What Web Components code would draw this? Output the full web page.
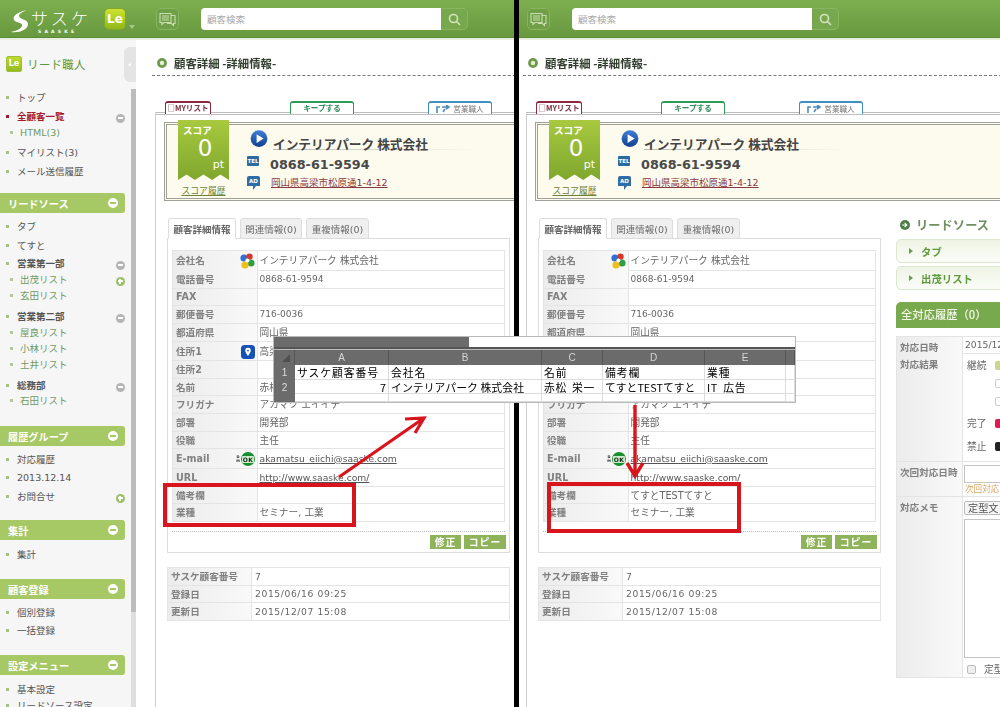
<!DOCTYPE html>
<html lang="ja"><head><meta charset="utf-8"><title>顧客詳細</title>
<style>
html,body{margin:0;padding:0;background:#fff}
body{position:relative;width:1000px;height:707px;overflow:hidden;font-family:"DejaVu Sans","Noto Sans CJK JP",sans-serif;color:#555}
.stage{display:flex;width:1000px;height:707px;filter:blur(.3px)}
.rule{flex:0 0 5px;background:#000}
sheet-overlay,mark-up{filter:blur(.3px)}
</style></head><body>
<div class="stage">
  <crm-pane style="flex:0 0 514px;--pad:16px">
    <crm-header slot="head" brand></crm-header>
    <side-nav slot="side">
      <nav-item>トップ</nav-item>
      <nav-item active tog="minus" style="margin-top:3px">全顧客一覧</nav-item>
      <nav-item sub>HTML(3)</nav-item>
      <nav-item style="margin-top:4px">マイリスト(3)</nav-item>
      <nav-item style="margin-top:3px">メール送信履歴</nav-item>
      <nav-bar style="margin:14px 0 5px">リードソース</nav-bar>
      <nav-item>タブ</nav-item>
      <nav-item style="margin-top:3px">てすと</nav-item>
      <nav-item group tog="minus" style="margin-top:2px">営業第一部</nav-item>
      <nav-item sub tog="plus">出茂リスト</nav-item>
      <nav-item sub>玄田リスト</nav-item>
      <nav-item group tog="minus" style="margin-top:5px">営業第二部</nav-item>
      <nav-item sub>屋良リスト</nav-item>
      <nav-item sub>小林リスト</nav-item>
      <nav-item sub>土井リスト</nav-item>
      <nav-item group tog="minus" style="margin-top:5px">総務部</nav-item>
      <nav-item sub style="margin-top:-1px">石田リスト</nav-item>
      <nav-bar style="margin:18px 0 5px">履歴グループ</nav-bar>
      <nav-item>対応履歴</nav-item>
      <nav-item style="margin-top:2px">2013.12.14</nav-item>
      <nav-item tog="plus" style="margin-top:3px">お問合せ</nav-item>
      <nav-bar style="margin:16px 0 6px">集計</nav-bar>
      <nav-item>集計</nav-item>
      <nav-bar style="margin:17px 0 5px">顧客登録</nav-bar>
      <nav-item>個別登録</nav-item>
      <nav-item style="margin-top:2px">一括登録</nav-item>
      <nav-bar style="margin:17px 0 6px">設定メニュー</nav-bar>
      <nav-item>基本設定</nav-item>
      <nav-item>リードソース設定</nav-item>
    </side-nav>
    <crm-detail slot="main"></crm-detail>
  </crm-pane>
  <div class="rule"></div>
  <crm-pane style="flex:1 1 0;--pad:4px">
    <crm-header slot="head"></crm-header>
    <crm-detail slot="main" wide note="てすとTESTてすと"></crm-detail>
  </crm-pane>
</div>
<sheet-overlay></sheet-overlay>
<mark-up></mark-up>
<script>
function def(name,css,render){
  customElements.define(name,class extends HTMLElement{
    connectedCallback(){
      if(this.shadowRoot)return;
      const r=this.attachShadow({mode:'open'});
      r.innerHTML='<style>'+css+'</style>'+render(this);
    }
  });
}

def('crm-pane',`
:host{display:flex;flex-direction:column;height:707px;overflow:hidden;min-width:0}
.body{display:flex;flex:1;min-height:0}
.main{flex:1;min-width:0;overflow:hidden;padding-left:var(--pad,0)}
`,()=>`<slot name="head"></slot><div class="body"><slot name="side"></slot><div class="main"><slot name="main"></slot></div></div>`);

def('crm-header',`
:host{display:flex;align-items:flex-start;height:40px;box-sizing:border-box;flex:none;padding-top:8px;
 background:linear-gradient(#7dae4f,#699a40 92%);border-bottom:2px solid #e9efdf;box-shadow:inset 0 -1px 0 #5a8a36}
.logo{display:flex;width:95px;margin-left:9px;height:30px;position:relative;color:#fff}
.logo svg{flex:none;margin-top:1px}
.kana{font-size:17px;letter-spacing:3.2px;line-height:20px;margin-left:2px;white-space:nowrap;font-family:"Noto Sans CJK JP",sans-serif;font-weight:300}
.roman{position:absolute;left:29px;top:21px;font-size:4.5px;font-weight:bold;letter-spacing:3.2px;line-height:5px}
.le{width:22px;height:22px;border-radius:5px;background:linear-gradient(#cfe32e,#8fb71c);border:1px solid #7fa82a;box-sizing:border-box;color:#fff;font:bold 12px/20px "DejaVu Sans",sans-serif;text-align:center}
.caret{width:0;height:0;border:3px solid transparent;border-top:4px solid #a6c98a;margin:17px 0 0 3px}
.chat{width:23px;height:22px;box-sizing:border-box;border:1px solid #88b560;border-radius:5px;background:#6f9f46;display:flex;align-items:center;justify-content:center}
.search{display:flex;height:22px}
.search .in{width:240px;box-sizing:border-box;background:#fff;border-radius:4px 0 0 4px;font-size:9.5px;color:#a8a8a8;line-height:22px;padding-left:6px;font-family:"Noto Sans CJK JP",sans-serif}
.search .go{width:27px;box-sizing:border-box;border:1px solid #88b560;border-left:0;border-radius:0 5px 5px 0;background:#78a84e;display:flex;align-items:center;justify-content:center}
`,h=>{
 const b=h.hasAttribute('brand');
 return (b?`<div class="logo"><svg width="20" height="24" viewBox="0 0 20 24"><path fill="#fff" d="M18 1C9 3 3 7 5 11c2 3 9 2 8 6-1 3-6 5-11 6 8 1 17-2 17-8 0-5-8-4-9-8 0-2 3-4 8-6z"/></svg><span class="kana">サスケ</span><span class="roman">SAASKE</span></div>
 <div class="le">Le</div><div class="caret"></div><div style="width:21px"></div>`:`<div style="width:8px"></div>`)+
 `<div class="chat"><svg width="17" height="15" viewBox="0 0 17 15" fill="none" stroke="#c9ddb0" stroke-width="1.1"><path d="M1 1.5h11v9H5l-2 2v-2H1z"/><path d="M3 4h7M3 6h7M3 8h7"/><path d="M12 3.5h4v8h-1.5v2l-2-2H8"/></svg></div>
 <div style="width:22px"></div>
 <div class="search"><div class="in">顧客検索</div><div class="go"><svg width="13" height="13" viewBox="0 0 13 13" fill="none" stroke="#d2e3bd" stroke-width="1.6"><circle cx="5.5" cy="5.5" r="4"/><path d="M8.5 8.5l3.5 3.5"/></svg></div></div>`;
});

def('side-nav',`
:host{display:flex;flex:0 0 136px;position:relative;background:#f6f6f6}
.col{width:131px;box-sizing:border-box}
.brand{display:flex;align-items:center;height:49px;padding:0 0 2px 6px;box-sizing:border-box;color:#5b9a3c;font-size:11.7px;font-family:"Noto Sans CJK JP",sans-serif}
.brand b{width:16px;height:16px;border-radius:3px;background:linear-gradient(#c4dd2e,#8fb81f);color:#fff;font:bold 8px/16px "DejaVu Sans",sans-serif;text-align:center;margin-right:5px;box-shadow:0 0 0 1px #9fbf3c inset}
.list{width:125px;height:618px;overflow:visible}
.rail{width:5px;background:#dedede;margin-top:49px;height:618px}
.rail i{display:block;height:523px;background:#bcbcbc}
.toggle{position:absolute;left:124px;top:7px;width:12px;height:35px;background:#e4e4e4;border-radius:6px 0 0 6px;display:flex;align-items:center;justify-content:center}
.toggle i{border:2px solid transparent;border-right:3px solid #fff;margin-left:-3px}
`,()=>`<div class="col"><div class="brand"><b>Le</b>リード職人</div><div class="list"><slot></slot></div></div><div class="rail"><i></i></div><div class="toggle"><i></i></div>`);

def('nav-item',`
:host{display:flex;align-items:center;height:16px;font-size:9.5px;color:#555;padding-left:6px;white-space:nowrap;position:relative}
.dot{width:3px;height:3px;background:#a9bf84;margin-right:8px;flex:none}
:host([sub]){padding-left:10px;color:#6f9a62}
:host([sub]) .dot{margin-right:7px;background:#b7c99a}
:host([group]){font-weight:bold;color:#555}
:host([active]){font-weight:bold;color:#a3192c}
:host([active]) .dot{background:#a3192c}
.tog{position:absolute;left:115.5px;top:5.5px;width:9px;height:9px;border-radius:50%;display:flex;align-items:center;justify-content:center}
.tog i{width:5px;height:1.4px;background:#fff;position:relative;display:block}
.minus{background:#b4b4b4}.plus{background:#99c267}
.plus i::after{content:"";position:absolute;left:1.8px;top:-1.8px;width:1.4px;height:5px;background:#fff}
`,h=>{const t=h.getAttribute('tog');return `<span class="dot"></span><slot></slot>`+(t?`<span class="tog ${t}"><i></i></span>`:'');});

def('nav-bar',`
:host{display:flex;align-items:center;height:20px;width:125px;box-sizing:border-box;padding-left:8px;background:#a6c865;border-radius:0 3px 3px 0;color:#fff;font-weight:bold;font-size:10.2px;position:relative;font-family:"Noto Sans CJK JP",sans-serif}
.m{position:absolute;left:108px;top:5px;width:10px;height:10px;border-radius:50%;background:#fff;display:flex;align-items:center;justify-content:center}
.m i{width:6px;height:2px;background:#a6c865}
`,()=>`<slot></slot><span class="m"><i></i></span>`);

def('data-table',`
:host{display:block;border:1px solid #e4e4e4;border-bottom:0;--lw:85px}
`,()=>`<slot></slot>`);

def('data-row',`
:host{display:grid;grid-template-columns:var(--lw,85px) 1fr;box-sizing:border-box;height:var(--h,18px);border-bottom:1px solid #e4e4e4;font-size:9.7px;color:#666}
.l{display:flex;justify-content:space-between;align-items:center;padding:0 2px 1px 3px;background:linear-gradient(90deg,#ececec,#f9f9f9);border-right:1px solid #e4e4e4;font-weight:bold;color:#808080;font-size:9.6px;white-space:nowrap;box-sizing:border-box;min-width:0}
.v{display:flex;align-items:center;padding:0 0 1px 1.5px;white-space:nowrap;min-width:0}
:host([latin]) .v{font-size:9.05px}
:host([first]) .l,:host([first]) .v{padding-bottom:3px}
:host([dates]) .v{font-size:9.2px;letter-spacing:.6px;padding-left:3px}
:host([top]) .l{align-items:flex-start;padding-top:3px}
:host([top]) .v{display:block;padding:0}
`,()=>`<div class="l"><span><slot name="label"></slot></span><slot name="icon"></slot></div><div class="v"><slot></slot></div>`);

def('score-ribbon',`
:host{display:block;width:51px;margin-top:-5px;text-align:center}
.r{height:60px;position:relative;background:linear-gradient(#a8c93f,#7fa72e);clip-path:polygon(0 0,100% 0,100% 100%,83% 91%,67% 100%,50% 91%,33% 100%,17% 91%,0 100%);color:#fff;box-sizing:border-box;padding:4px 0 0 0}
.t{display:block;font-size:9.6px;font-weight:bold;line-height:12px;text-align:left;padding-left:5px;font-family:"Noto Sans CJK JP",sans-serif}
.n{display:block;font-size:23px;line-height:24px;margin-top:0;text-align:center;padding-left:3px}
.p{display:block;font-size:11px;line-height:10px;text-align:right;padding-right:5px}
a{display:block;margin-top:4px;font-size:8.8px;line-height:14px;color:#6d8236;text-decoration:underline;white-space:nowrap;font-family:"Noto Sans CJK JP",sans-serif}
`,()=>`<div class="r"><span class="t">スコア</span><span class="n">0</span><span class="p">pt</span></div><a>スコア履歴</a>`);

const ICON={
 google:`<svg slot="icon" width="15" height="16" viewBox="0 0 15 16" style="margin-top:2px"><circle cx="4" cy="5" r="3.6" fill="#2f6fd6"/><circle cx="9.5" cy="3.6" r="3.2" fill="#d9362b"/><circle cx="11" cy="10" r="3.6" fill="#2f9e44"/><circle cx="5" cy="12" r="3.6" fill="#f0bf1a"/><circle cx="7.4" cy="7.6" r="2" fill="#fff"/></svg>`,
 pin:`<svg slot="icon" width="14" height="14" viewBox="0 0 14 14" style="margin-top:2px"><rect width="14" height="14" rx="3.5" fill="#1652b5"/><path fill="#fff" d="M7 2.8a2.8 2.8 0 0 0-2.8 2.8C4.2 7.6 7 11 7 11s2.8-3.4 2.8-5.4A2.8 2.8 0 0 0 7 2.8zm0 3.7a.9.9 0 1 1 0-1.8.9.9 0 0 1 0 1.8z"/></svg>`,
 dok:`<span slot="icon" style="display:flex;align-items:center;gap:1px;margin-top:2px;font-family:'DejaVu Sans',sans-serif;font-weight:bold"><span style="font-size:3.6px;line-height:4px;color:#222;width:4px;text-align:center">D<br>M</span><span style="display:flex;align-items:center;justify-content:center;width:14px;height:14px;border-radius:50%;background:#17902f"><span style="display:block;width:12px;height:7px;background:#cfe9cf;color:#0c2a0c;border-radius:1px;font-size:6px;line-height:7px;text-align:center;letter-spacing:.3px">OK</span></span></span>`
};

def('crm-detail',`
:host{display:block;width:900px;color:#555}
.hd{height:36px;box-sizing:border-box;border-bottom:1px dashed #777;display:flex;align-items:center;padding:10px 0 0 5px}
.hd svg{flex:none}
.hd h1{margin:0 0 0 7px;font-size:11.4px;font-weight:bold;color:#334030;font-family:"Noto Sans CJK JP",sans-serif}
.flags{display:flex;margin:25px 0 -2px 13px;position:relative;z-index:1;height:13px;align-items:flex-end}
.flag{box-sizing:border-box;height:13px;background:#fff;border:1px solid #bbb;border-top:2px solid;border-bottom:0;border-radius:3px 3px 0 0;font-size:7.6px;font-weight:bold;line-height:10px;text-align:center;white-space:nowrap;font-family:"Noto Sans CJK JP",sans-serif}
.my{width:46px;border-color:#8b2a3d;color:#7a3340;margin-right:79px}
.keep{width:64px;border-color:#2e9a58;color:#2f8a58;margin-right:74px}
.sales{width:64px;border-color:#3f8fc3;color:#777;font-weight:normal;display:flex;align-items:center;justify-content:center;gap:3px}
.frame{margin-left:3px;border-left:1px solid #cfcfcf;border-top:3px double #bdbdbd;padding:7px 0 0 8px;height:660px;box-sizing:border-box}
.card{position:relative;box-sizing:border-box;width:1000px;height:79px;background:#fdfaee;border:3px double #9da197;display:flex;padding-left:11px}
.who{width:707px;flex:none;margin-left:18px;padding-top:5px;box-sizing:border-box}
.nm{display:flex;height:20px;margin-left:3px;margin-top:0}
.nm svg{flex:none}
.nm h2{margin:0 0 0 5px;width:205px;font-size:12.7px;line-height:19px;font-weight:bold;color:#444;white-space:nowrap;background:linear-gradient(90deg,#b9b9b0,#fdfaee) bottom/100% 1px no-repeat;height:20px;box-sizing:border-box;padding-top:4px;font-family:"Noto Sans CJK JP",sans-serif}
.tel{display:flex;margin-top:6px;height:18px}
.tel b{font-size:12.8px;line-height:18px;color:#4a4a4a;margin-left:11px}
.ad{display:flex;margin-top:2px}
.ad a{margin-left:11px;font-size:9.5px;line-height:14px;color:#883a40;text-decoration:underline;white-space:nowrap}
.tag{flex:none;width:12px;height:10px;background:#2c6aa4;border-radius:1px;color:#fff;font:bold 5.6px/10px "DejaVu Sans",sans-serif;text-align:center}
.bub{flex:none;width:13px;height:15px;background:linear-gradient(#2f6da8 10px,transparent 10px);position:relative;color:#fff;font:bold 5.6px/10px "DejaVu Sans",sans-serif;text-align:center;border-radius:2px}
.bub::after{content:"";position:absolute;left:6px;top:10px;border:3px solid transparent;border-top:4px solid #2f6da8;border-left:0}
.side{padding-top:1px;font-size:9.5px;color:#777;line-height:16px}
.side div{height:16px}
.side b{display:block;font-size:12px;color:#444;line-height:16px}
.side .hp{display:flex;margin-top:5px;align-items:flex-start}
.side .hp a{margin-left:6px;color:#883a40;text-decoration:underline;font-size:9.5px;line-height:14px}
.cols{display:flex;margin-top:17px;margin-left:3px}
.l{width:343px;flex:none}
.tabs{display:flex;height:21px;margin-left:1px;gap:4px;position:relative;z-index:1;margin-bottom:-1px}
.tab{box-sizing:border-box;height:21px;border:1px solid #ddd;border-radius:3px 3px 0 0;background:#efefef;font-size:9.5px;line-height:21px;text-align:center;color:#6b6b6b;white-space:nowrap}
.tab.on{background:#fff;border-bottom-color:#fff;font-weight:bold;color:#666;width:68px}
.tab.b{width:62px}.tab.c{width:63px}
.panel{border:1px solid #ddd;padding:11px 4px 4px;box-sizing:border-box;height:315px}
.dots{border-top:1px dotted #bbb;margin-top:9px}
.btns{display:flex;justify-content:flex-end;gap:3px;margin-top:3px;margin-right:-1px}
.btn{height:14px;background:#8fb35a;color:#fff;font-size:9.8px;font-weight:bold;line-height:14px;text-align:center;letter-spacing:1px;font-family:"Noto Sans CJK JP",sans-serif}
.b1{width:31px}.b2{width:42px}
.meta{margin-top:14px;--lw:84px}
.r{width:200px;margin:-1px 0 0 15px;flex:none}
.rh{display:flex;align-items:center;height:15px;margin-bottom:7px;font-size:12.2px;font-weight:bold;color:#6f8f61;font-family:"Noto Sans CJK JP",sans-serif;letter-spacing:.1px}
.rh svg{margin:0 6px 0 4px}
.acc{height:24px;box-sizing:border-box;border:1px solid #dbe6cf;border-radius:5px 0 0 5px;background:linear-gradient(#eef4e5,#fbfcf8);display:flex;align-items:center;font-size:10.4px;font-weight:bold;color:#5f9a3d;margin-bottom:3px;padding-left:12px;font-family:"Noto Sans CJK JP",sans-serif}
.acc i{border:3px solid transparent;border-left:4px solid #6d9a55;border-right:0;margin-right:8px}
.hist{height:26px;margin-top:12px;background:#79a94d;border-radius:5px 0 0 0;color:#f2f8e8;font-size:11.3px;line-height:25px;padding-left:5px;margin-bottom:8px;font-family:"Noto Sans CJK JP",sans-serif;font-weight:500}
.res{padding-top:2px;font-size:9.8px;color:#666}
.res div{display:flex;align-items:center;height:18px;padding-left:4px}
.res span{width:28px}
.res i{display:block;width:12px;height:9px;border-radius:2px;box-sizing:border-box}
.in{display:block;width:120px;height:18px;box-sizing:border-box;border:1px solid #c4c4c4;margin:3px 0 0 1px;background:#fff;padding:0}
.warn{font-size:8.6px;color:#dba465;line-height:10px;margin:0 0 0 2px;white-space:nowrap;font-family:"Noto Sans CJK JP",sans-serif}
.sel{width:120px;height:14px;box-sizing:border-box;border:1px solid #bbb;background:#f5f5f5;border-radius:2px;margin:4px 0 0 1px;font-size:10.2px;line-height:12px;padding-left:3px;color:#555;font-family:"Noto Sans CJK JP",sans-serif}
.ta{display:block;width:120px;height:139px;box-sizing:border-box;border:1px solid #c4c4c4;background:#fff;margin:4px 0 0 1px;padding:0;resize:none}
.chk{display:flex;align-items:center;margin:4px 0 0 4px;font-size:9.8px;color:#666}
.chk i{display:block;width:9px;height:9px;border:1px solid #bbb;border-radius:2px;background:#eee;box-sizing:border-box;margin-right:8px}
`,h=>{
 const wide=h.hasAttribute('wide');
 const note=h.getAttribute('note')||'';
 const row=(hh,label,val,extra='',icon='')=>`<data-row ${extra} style="--h:${hh}px"><span slot="label">${label}</span>${icon}${val}</data-row>`;
 const ln=(t)=>`<span style="color:#555;text-decoration:underline;font-size:9.2px">${t}</span>`;
 /* rows that lie fully under the spreadsheet window in the right pane show nothing */
 const covered=wide;
 return `
 <div class="hd"><svg width="10" height="10" viewBox="0 0 10 10"><circle cx="5" cy="5" r="4.9" fill="#6d9a4a"/><circle cx="5" cy="5" r="2.2" fill="#e6efd6"/></svg><h1>顧客詳細 -詳細情報-</h1></div>
 <div class="flags"><div class="flag my">□MYリスト</div><div class="flag keep">キープする</div><div class="flag sales"><svg width="14" height="8" viewBox="0 0 14 8" fill="none" stroke="#4d8cb5" stroke-width="1.6"><path d="M1 8V2h3M6 2h7M10 0l3 2-3 2M7 7l2-3"/></svg>営業職人</div></div>
 <div class="frame">
  <div class="card">
   <score-ribbon></score-ribbon>
   <div class="who">
    <div class="nm"><svg width="18" height="18" viewBox="0 0 18 18"><defs><linearGradient id="pb" x1="0" y1="0" x2="0" y2="1"><stop offset="0" stop-color="#3f7fd6"/><stop offset="1" stop-color="#123f8f"/></linearGradient></defs><circle cx="9" cy="8.6" r="8.4" fill="url(#pb)"/><path d="M6.6 4.2l7 4.4-7 4.4z" fill="#fff"/></svg><h2>インテリアパーク 株式会社</h2></div>
    <div class="tel"><span class="tag">TEL</span><b>0868-61-9594</b></div>
    <div class="ad"><span class="bub">AD</span><a>岡山県高梁市松原通1-4-12</a></div>
   </div>
   ${wide?`<div class="side"><div>開発部</div><div>主任</div><b>赤松 栄一</b><div class="hp"><span class="bub" style="width:15px">HP</span><a>http://www.saaske.com/</a></div></div>`:''}
  </div>
  <div class="cols">
   <div class="l">
    <div class="tabs"><div class="tab on">顧客詳細情報</div><div class="tab b">関連情報(0)</div><div class="tab c">重複情報(0)</div></div>
    <div class="panel">
     <data-table>
      ${row(20,'会社名','インテリアパーク 株式会社','first',ICON.google)}
      ${row(18,'電話番号','0868-61-9594','latin')}
      ${row(17,'FAX','')}
      ${row(18,'郵便番号','716-0036','latin')}
      ${row(18,'都道府県','岡山県')}
      ${row(19,covered?'':'住所1',covered?'':'高梁','',covered?'':ICON.pin)}
      ${row(18,covered?'':'住所2','')}
      ${row(17,covered?'':'名前',covered?'':'赤松')}
      ${row(18,'フリガナ','アカマツ エイイチ')}
      ${row(18,'部署','開発部')}
      ${row(17,'役職','主任')}
      ${row(20,'E-mail',ln('akamatsu_eiichi@saaske.com'),'',ICON.dok)}
      ${row(18,'URL',ln('http://www.saaske.com/'))}
      ${row(17,'備考欄',note)}
      ${row(18,'業種','セミナー, 工業')}
     </data-table>
     <div class="dots"></div>
     <div class="btns"><div class="btn b1">修正</div><div class="btn b2">コピー</div></div>
    </div>
    <data-table class="meta">
      ${row(18,'サスケ顧客番号','7','dates')}
      ${row(17,'登録日','2015/06/16 09:25','dates')}
      ${row(18,'更新日','2015/12/07 15:08','dates')}
    </data-table>
   </div>
   ${wide?`<div class="r">
     <div class="rh"><svg width="10" height="10" viewBox="0 0 10 10"><circle cx="5" cy="5" r="5" fill="#4f7f46"/><path d="M2.2 5h4M4.6 2.8L6.8 5 4.6 7.2" stroke="#fff" stroke-width="1.2" fill="none"/></svg>リードソース</div>
     <div class="acc"><i></i>タブ</div>
     <div class="acc"><i></i>出茂リスト</div>
     <div class="hist">全対応履歴（0）</div>
     <data-table style="--lw:66px">
      <data-row top style="--h:17px"><span slot="label">対応日時</span><span style="font-size:9.2px;line-height:15px;padding-left:2px">2015/12</span></data-row>
      <data-row top style="--h:108px"><span slot="label">対応結果</span>
        <div class="res"><div><span>継続</span><i style="background:#c9d68e"></i></div><div><span></span><i style="border:1px solid #ccc;background:#fff"></i></div><div><span></span><i style="border:1px solid #ccc;background:#fff"></i></div><div style="margin-top:4px"><span>完了</span><i style="background:#e0184c"></i></div><div style="margin-top:5px"><span>禁止</span><i style="background:#222"></i></div></div>
      </data-row>
      <data-row top style="--h:35px"><span slot="label">次回対応日時</span><div class="in"></div><p class="warn">次回対応</p></data-row>
      <data-row top style="--h:181px"><span slot="label">対応メモ</span><div class="sel">定型文</div><div class="ta"></div><div class="chk"><i></i>定型</div></data-row>
     </data-table>
   </div>`:''}
  </div>
 </div>`;
});

def('sheet-overlay',`
:host{position:absolute;left:274px;top:337px;width:521px;height:65px;box-sizing:border-box;background:#fff;box-shadow:0 0 0 1px #b9b9b9;font-family:"Noto Sans CJK JP",sans-serif;color:#000;overflow:hidden}
.bar{height:10px;background:linear-gradient(90deg,#6b6b6b 195px,#fff 195px)}
.line{height:3px;background:linear-gradient(#555 2px,#bbb 2px)}
.g{display:grid;grid-template-columns:21px 94px 153px 61px 102px 81px 1fr;grid-template-rows:15px 15px 14px 8px}
.g>div{box-sizing:border-box;font-size:10.8px;line-height:15px;padding-left:2px;white-space:nowrap;border-right:1px solid #dcdcdc;border-bottom:1px solid #dcdcdc;overflow:hidden}
.g>.h{background:#6b6b6b;color:#d5d5d5;font:10px/15px "Liberation Sans",sans-serif;text-align:center;border-right:1px solid #555;border-bottom:0;padding:0}
.g>.n{background:#6b6b6b;color:#ddd;font:10px/15px "Liberation Sans",sans-serif;text-align:center;border:0;padding:0}
.sp{letter-spacing:.95px}
.g>.w{letter-spacing:.7px;word-spacing:2px}
`,()=>`<div class="bar"></div><div class="line"></div><div class="g">
 <div class="h"><svg width="21" height="15" viewBox="0 0 21 15" style="display:block"><path d="M16 4v8H8z" fill="#4f4f4f"/></svg></div><div class="h">A</div><div class="h">B</div><div class="h">C</div><div class="h">D</div><div class="h">E</div><div class="h"></div>
 <div class="n">1</div><div class="sp">サスケ顧客番号</div><div class="sp">会社名</div><div class="sp">名前</div><div class="sp">備考欄</div><div class="sp">業種</div><div></div>
 <div class="n">2</div><div style="text-align:right;padding-right:2px">7</div><div style="letter-spacing:.1px">インテリアパーク 株式会社</div><div class="w">赤松 栄一</div><div>てすとTESTてすと</div><div class="w">IT 広告</div><div></div>
 <div class="n"></div><div></div><div></div><div></div><div></div><div></div><div></div>
 </div>`);

def('mark-up',`
:host{position:absolute;left:0;top:0;width:1000px;height:707px;pointer-events:none}
svg{display:block}
`,()=>`<svg width="1000" height="707" viewBox="0 0 1000 707" fill="none" stroke="#d8141c">
 <rect x="165" y="485" width="189" height="40" stroke-width="4"/>
 <rect x="549" y="484" width="190" height="47" stroke-width="4"/>
 <path d="M339 477L424 418M405 419L424 418L415 433" stroke-width="3.2"/>
 <path d="M635 405V475M627 463L635 476L643 463" stroke-width="3.4"/>
</svg>`);
</script>
</body></html>
